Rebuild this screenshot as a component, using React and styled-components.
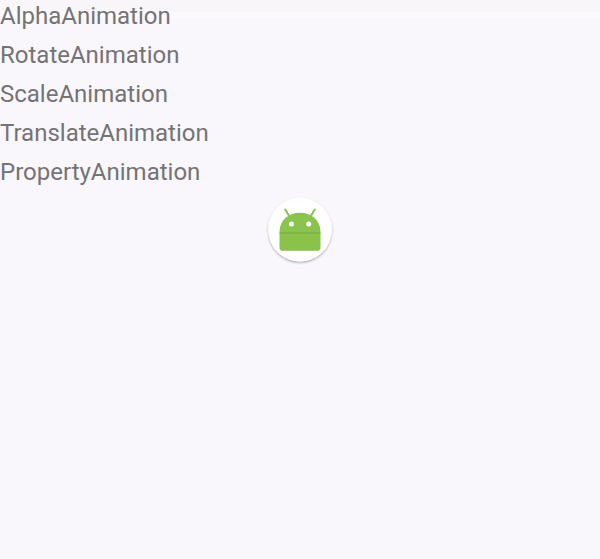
import React from 'react';
import styled, { createGlobalStyle } from 'styled-components';

const GlobalStyle = createGlobalStyle`
  body {
    margin: 0;
    background: #f9f7fb;
    font-family: Roboto, 'Liberation Sans', sans-serif;
  }
`;

const Screen = styled.main`
  display: flex;
  flex-direction: column;
  height: 559px;
  overflow: hidden;
  background: linear-gradient(#faf5fb 0, #f8f6f9 8px, #f8f6f9 12px, #fcfafd 13px, #fcfafd 17px, #f9f7fb 19px);
`;

const AnimationList = styled.nav`
  display: flex;
  flex-direction: column;
  align-items: flex-start;
  margin-top: -3.4px;
`;

const AnimationItem = styled.div`
  height: 39.2px;
  line-height: 39.2px;
  font-size: 24px;
  color: #747376;
  white-space: nowrap;
`;

const Launcher = styled.svg`
  display: block;
  align-self: center;
  width: 80px;
  height: 80px;
  margin-top: -2.6px;
`;

const animations = [
  'AlphaAnimation',
  'RotateAnimation',
  'ScaleAnimation',
  'TranslateAnimation',
  'PropertyAnimation',
];

function AndroidIcon() {
  return (
    <Launcher viewBox="0 0 80 80" aria-label="Android">
      <defs>
        <filter id="discShadow" x="-20%" y="-20%" width="140%" height="140%">
          <feGaussianBlur stdDeviation="0.9" />
        </filter>
      </defs>
      <circle cx="40" cy="41" r="31.8" fill="#aaa7ad" filter="url(#discShadow)" />
      <circle cx="40" cy="39.7" r="32" fill="#fff" />
      <path d="M25.3 19.6 29.4 26.4M54.7 19.6 50.6 26.4" stroke="#8abb52" strokeWidth="1.9" strokeLinecap="round" />
      <path d="M19.5 43v-1.5C19.8 30 28.5 22.8 40 22.8S60.2 30 60.5 41.5V43z" fill="#8bc34f" />
      <path d="M19.5 43h41v15.3a2 2 0 0 1-2 2h-37a2 2 0 0 1-2-2z" fill="#8bc34a" />
      <path d="M19.5 43h41" stroke="#70a943" strokeWidth="0.9" />
      <path d="M21 60.4h38" stroke="#76aa45" strokeWidth="0.6" />
      <circle cx="31.4" cy="34.1" r="2.5" fill="#fff" />
      <circle cx="48.7" cy="34.1" r="2.5" fill="#fff" />
    </Launcher>
  );
}

export default function App() {
  return (
    <>
      <GlobalStyle />
      <Screen>
        <AnimationList>
          {animations.map((name) => (
            <AnimationItem key={name}>{name}</AnimationItem>
          ))}
        </AnimationList>
        <AndroidIcon />
      </Screen>
    </>
  );
}
